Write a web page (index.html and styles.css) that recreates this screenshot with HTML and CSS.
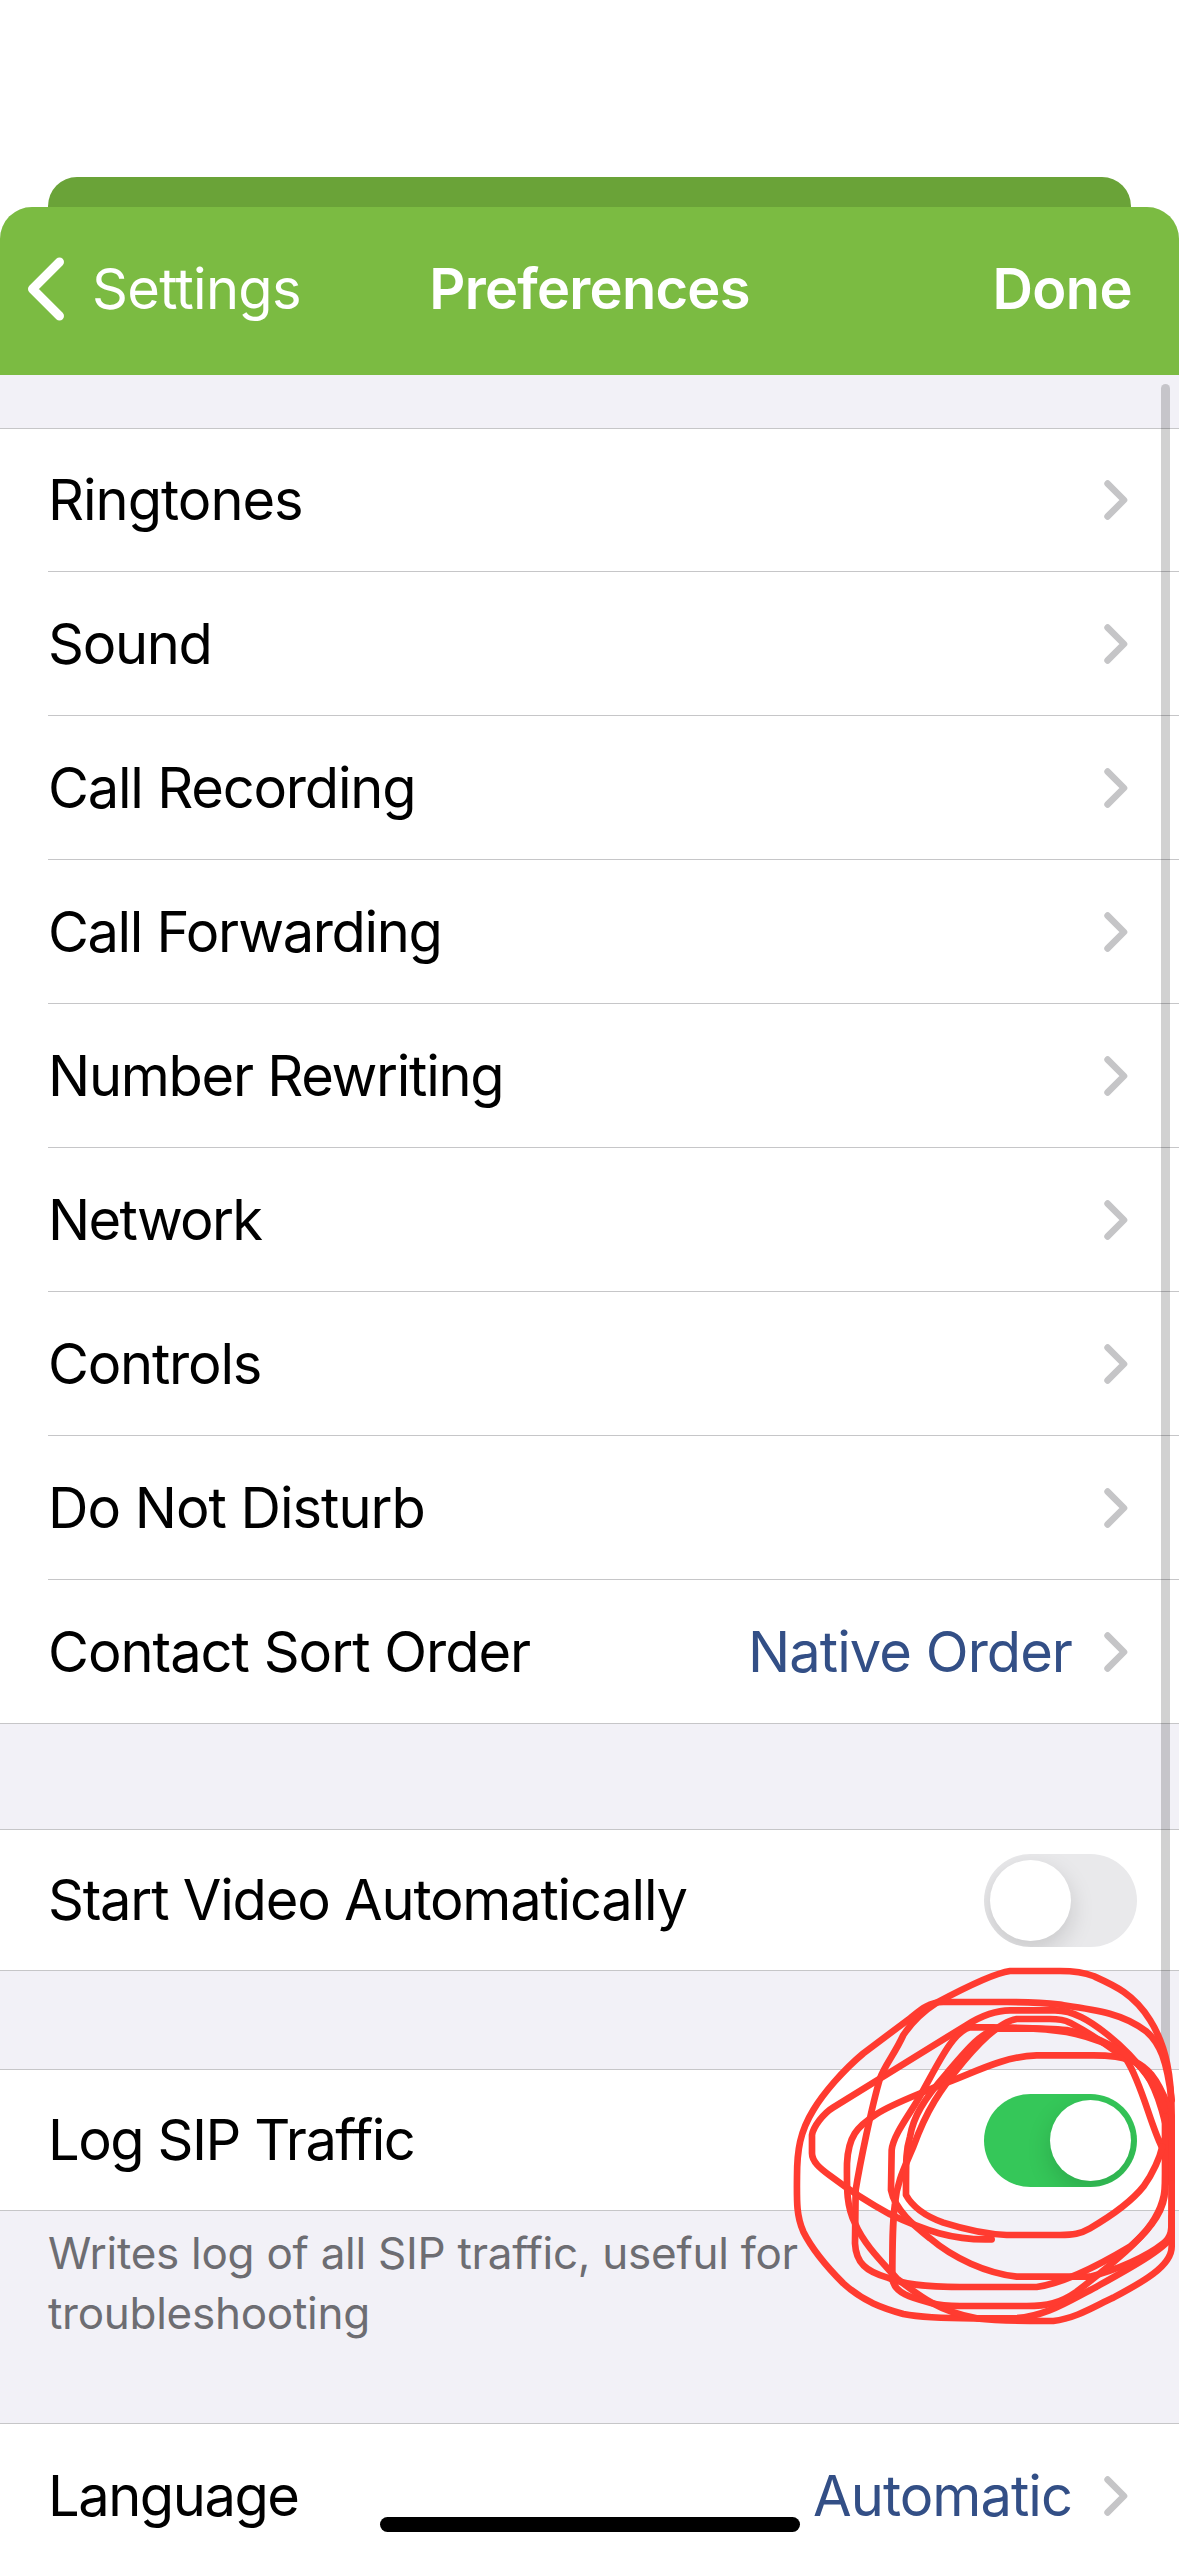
FILE: index.html
```
<!DOCTYPE html>
<html lang="en">
<head>
  <meta charset="UTF-8">
  <meta name="viewport" content="width=device-width, initial-scale=1.0">
  <title>Preferences</title>
  <link rel="stylesheet" href="styles.css">
</head>
<body>

  <!-- chevron shared by all rows -->
  <svg class="defs" width="0" height="0">
    <symbol id="chevron" viewBox="0 0 24 40">
      <path d="M3.6 3.6 L20 20 L3.6 36.4" fill="none" stroke="#c5c5c7" stroke-width="6.6" stroke-linecap="round" stroke-linejoin="round"/>
    </symbol>
  </svg>

  <div class="screen">
    <div class="back-card"></div>

    <div class="sheet">
      <header class="navbar">
        <a class="back">
          <svg width="38" height="64" viewBox="0 0 38 64">
            <path d="M32.5 5 L5.5 32 L32.5 59" fill="none" stroke="#fff" stroke-width="9" stroke-linecap="round" stroke-linejoin="round"/>
          </svg>
          <span class="back-label">Settings</span>
        </a>
        <h1 class="title">Preferences</h1>
        <a class="done">Done</a>
      </header>

      <div class="group first">
        <div class="row ringtones"><span>Ringtones</span><svg class="arrow"><use href="#chevron"/></svg></div>
        <div class="row sound"><span>Sound</span><svg class="arrow"><use href="#chevron"/></svg></div>
        <div class="row recording"><span>Call Recording</span><svg class="arrow"><use href="#chevron"/></svg></div>
        <div class="row forwarding"><span>Call Forwarding</span><svg class="arrow"><use href="#chevron"/></svg></div>
        <div class="row rewriting"><span>Number Rewriting</span><svg class="arrow"><use href="#chevron"/></svg></div>
        <div class="row network"><span>Network</span><svg class="arrow"><use href="#chevron"/></svg></div>
        <div class="row controls"><span>Controls</span><svg class="arrow"><use href="#chevron"/></svg></div>
        <div class="row dnd"><span>Do Not Disturb</span><svg class="arrow"><use href="#chevron"/></svg></div>
        <div class="row sort"><span>Contact Sort Order</span><span class="value">Native Order</span><svg class="arrow"><use href="#chevron"/></svg></div>
      </div>

      <div class="group video">
        <div class="row switch-row"><span>Start Video Automatically</span><div class="switch"><div class="knob"></div></div></div>
      </div>

      <div class="group sip">
        <div class="row switch-row"><span>Log SIP Traffic</span><div class="switch on"><div class="knob"></div></div></div>
      </div>
      <p class="note">Writes log of all SIP traffic, useful for<br>troubleshooting</p>

      <div class="group language">
        <div class="row"><span>Language</span><span class="value">Automatic</span><svg class="arrow"><use href="#chevron"/></svg></div>
      </div>
    </div>

    <div class="scrollbar"></div>
    <div class="home-bar"></div>

    <!-- red pen marks around the SIP switch -->
    <svg class="scribble" viewBox="0 0 1197 1200">
      <path d="M635 868 C520 872 430 840 330 793 C260 755 200 715 150 677 C120 655 96 635 96 610 L96 555 C100 530 130 490 160 472 L560 225 C600 200 640 181 690 181 L825 181 C880 181 930 212 980 252 C1030 292 1070 335 1100 375 C1140 430 1160 480 1165 560"/>
      <path d="M1175 700 L1175 500 C1175 380 1160 290 1110 210 C1060 130 1000 105 940 78 C910 66 880 63 840 63 L690 63 C650 68 560 110 470 158 C420 190 390 225 370 255 C345 310 315 345 300 385 C275 470 240 640 227 720 L225 880 C228 940 260 965 320 982 C370 1005 450 1011 540 1011 L770 1011 C850 1000 950 950 1050 890 C1120 830 1155 770 1155 720 L1160 480"/>
      <path d="M1175 450 C1160 330 1140 280 1100 245 C1030 190 950 180 840 164 C780 157 730 156 680 156 L490 156 C440 156 410 190 390 205 L250 310 C190 360 130 430 100 480 C60 545 51 600 51 680 C50 760 50 800 70 845 C100 905 150 960 190 1000 C250 1055 310 1075 370 1092 C430 1104 500 1105 580 1105 L700 1105 C800 1100 870 1050 950 1010 C1040 960 1150 900 1175 860 L1175 500"/>
      <path d="M1165 470 C1130 380 1100 350 1060 333 C1020 318 980 316 940 316 L770 316 C660 320 570 375 480 405 C400 440 340 460 290 492 C230 530 205 560 201 640 C200 720 200 770 225 820 C250 880 300 930 350 985 C420 1040 480 1085 590 1105 C670 1114 740 1113 820 1113 C890 1105 950 1065 1000 1043 C1080 1000 1175 950 1175 890 L1175 700"/>
      <path d="M1165 560 C1140 440 1110 370 1065 335 C1000 280 920 250 860 240 C800 234 740 234 640 232 L570 232 C520 245 480 330 430 420 C400 480 340 550 335 600 L333 720 C345 780 400 825 450 865 C520 925 620 970 710 980 L930 980 C1010 960 1100 920 1150 880 C1175 860 1175 840 1175 800"/>
      <path d="M1145 590 C1110 520 1085 400 1040 330 C990 290 930 250 870 218 C850 208 830 207 810 207 L710 207 C660 215 600 275 550 335 C480 420 440 480 400 590 C370 660 350 700 345 760 C337 820 337 880 337 985 C340 1030 400 1045 450 1058 C480 1066 510 1068 540 1068 L740 1068 C800 1068 840 1060 890 1025 C960 970 1050 900 1100 840 C1140 790 1155 740 1155 700 L1155 500"/>
      <path d="M1155 480 C1135 400 1090 350 1030 308 C930 250 840 240 760 236 L650 236 C600 250 560 300 500 370 C430 450 400 500 390 560 C378 600 378 620 378 735 C400 775 440 800 490 818 C560 840 620 853 680 855 L840 855 C880 855 900 852 930 835 C990 800 1050 760 1090 710 C1120 670 1140 620 1147 590"/>
    </svg>
  </div>

</body>
</html>
```
FILE: styles.css
```
body {
  margin: 0;
  background-color: #fff;
  font-family: Inter, "Liberation Sans", sans-serif;
}

.defs {
  position: absolute;
}

.screen {
  position: relative;
  width: 1179px;
  height: 2556px;
  overflow: hidden;
  padding-top: 177px;
  box-sizing: border-box;
}

.back-card {
  height: 30px;
  margin: 0 48px;
  background-color: #6aa338;
  border-radius: 29px 29px 0 0;
}

.sheet {
  height: 2349px;
  background-color: #f2f1f7;
  border-radius: 32px 32px 0 0;
  overflow: hidden;
}

.navbar {
  height: 168px;
  box-sizing: border-box;
  padding-bottom: 4px;
  background-color: #7bbb42;
  color: #fff;
  display: grid;
  grid-template-columns: 1fr auto 1fr;
  align-items: center;
  font-size: 56px;
}

.back {
  display: flex;
  align-items: center;
  gap: 27px;
  padding-left: 27px;
}

.back-label {
  letter-spacing: -0.7px;
}

.title {
  margin: 0;
  font-size: 56px;
  font-weight: 600;
  letter-spacing: -0.75px;
}

.done {
  padding-right: 47px;
  font-weight: 600;
  letter-spacing: -0.6px;
  text-align: right;
}

.group {
  background-color: #fff;
  border-top: 1px solid #c6c6c8;
  border-bottom: 1px solid #c6c6c8;
}

.first {
  margin-top: 53px;
}

.video {
  margin-top: 105px;
}

.sip {
  margin-top: 98px;
}

.row {
  height: 143px;
  margin-left: 48px;
  padding-right: 51px;
  display: flex;
  align-items: center;
  justify-content: space-between;
  border-bottom: 1px solid #c6c6c8;
  font-size: 56px;
  letter-spacing: -1px;
}

.row:first-child {
  height: 142px;
}

.row:last-child {
  border-bottom: none;
}

.row .value {
  margin-left: auto;
  margin-right: 32px;
  color: #334f86;
  letter-spacing: -0.95px;
}

/* tracking per label */
.sound {
  letter-spacing: -1.3px;
}
.recording,
.controls,
.video .row {
  letter-spacing: -1.2px;
}
.forwarding {
  letter-spacing: -1.37px;
}
.rewriting {
  letter-spacing: -1.27px;
}
.network {
  letter-spacing: -1.67px;
}
.sip .row,
.language .row {
  letter-spacing: -1.45px;
}

.arrow {
  width: 24px;
  height: 40px;
}

.row.switch-row {
  height: 140px;
  padding-right: 42px;
}

.switch {
  width: 153px;
  height: 93px;
  padding: 6px;
  box-sizing: border-box;
  border-radius: 47px;
  background-color: #e9e9eb;
  display: flex;
  overflow: hidden;
}

.switch.on {
  background-color: #35c759;
  justify-content: flex-end;
}

.knob {
  width: 81px;
  height: 81px;
  border-radius: 50%;
  background-color: #fff;
  box-shadow: 0 9px 24px rgba(0, 0, 0, 0.15);
}

.note {
  height: 212px;
  box-sizing: border-box;
  margin: 0;
  padding: 12px 48px 0;
  font-size: 44px;
  line-height: 60px;
  letter-spacing: -0.27px;
  color: #6d6d72;
}

.language .row {
  height: 144px;
}

.scrollbar {
  position: absolute;
  left: 1161px;
  top: 384px;
  width: 9px;
  height: 1680px;
  border-radius: 5px;
  background-color: rgba(0, 0, 0, 0.18);
}

.home-bar {
  position: absolute;
  left: 380px;
  top: 2517px;
  width: 420px;
  height: 15px;
  border-radius: 8px;
  background-color: #000;
}

.scribble {
  position: absolute;
  left: 780px;
  top: 1950px;
  width: 399px;
  height: 400px;
  fill: none;
  stroke: #ff3b30;
  stroke-width: 20;
  stroke-linecap: round;
  stroke-linejoin: round;
}
```
